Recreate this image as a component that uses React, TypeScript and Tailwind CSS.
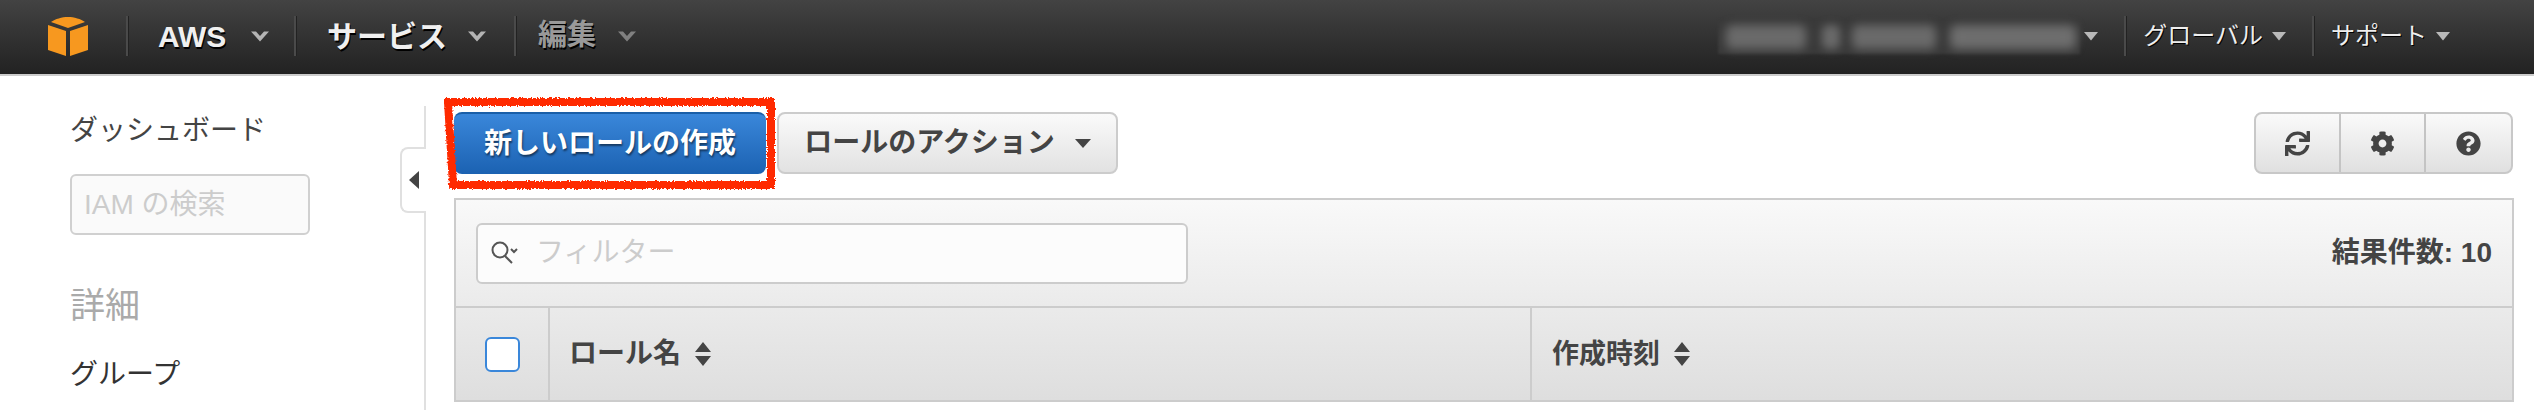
import { FC, ReactNode } from 'react';
import { FaCog, FaQuestionCircle, FaSync } from 'react-icons/fa';

const font = "font-['Liberation_Sans','Noto_Sans_CJK_JP',sans-serif]";

const Chevron: FC<{ dim?: boolean }> = ({ dim }) => (
  <svg width="18" height="12" viewBox="0 0 18 12" className={dim ? 'opacity-60' : ''}>
    <path d="M0 1.5h5L9 6l4-4.5h5L9 11.5z" fill="#b4b4b4" />
  </svg>
);

const SmallCaret: FC = () => (
  <svg width="14" height="10" viewBox="0 0 14 10">
    <path d="M0 1h14L7 9.5z" fill="#b9b9b9" />
  </svg>
);

const Divider: FC = () => <div className="h-10 w-[2px] shrink-0 bg-[#4a4a4a] shadow-[1px_0_0_#222]" />;

const SortIcon: FC = () => (
  <svg width="18" height="24" viewBox="0 0 18 24" className="shrink-0">
    <path d="M9 0l8 10H1zM9 24l-8-10h16z" fill="#444" />
  </svg>
);

const NavItem: FC<{ children: ReactNode; width: string }> = ({ children, width }) => (
  <div className={`flex h-10 items-center ${width}`}>{children}</div>
);

const ToolButton: FC<{ children: ReactNode; last?: boolean }> = ({ children, last }) => (
  <button
    className={`flex h-full w-[85px] items-center justify-center text-[25px] text-[#444] ${last ? '' : 'border-r-2 border-[#c4c4c4]'}`}
  >
    {children}
  </button>
);

const Sidebar: FC = () => (
  <aside className="relative mt-[30px] w-[426px] shrink-0 border-r-2 border-[#e0e0e0] pl-[70px]">
    <div className="mt-[5px] text-[28px] leading-[40px] text-[#444]">ダッシュボード</div>
    <div className="mt-[23px] flex h-[61px] w-[240px] items-center rounded-md border-2 border-[#d0d0d0] bg-[#fafafa] px-3 text-[28px] text-[#ccc]">
      IAM の検索
    </div>
    <div className="mt-[49px] text-[35px] leading-[44px] text-[#aaa]">詳細</div>
    <div className="mt-[27px] text-[28px] leading-[40px] text-[#333]">グループ</div>
    {/* collapse tab sits on the sidebar edge */}
    <div className="absolute right-[-2px] top-[41px] flex h-[66px] w-[26px] items-center justify-center rounded-l-lg border-2 border-r-0 border-[#e0e0e0] bg-white">
      <svg width="10" height="18" viewBox="0 0 10 18">
        <path d="M10 0v18L0 9z" fill="#444" />
      </svg>
    </div>
  </aside>
);

const HandDrawnBox: FC = () => (
  <svg className="pointer-events-none absolute left-[-10px] top-[-15px] h-[94px] w-[334px]" viewBox="0 0 334 94">
    <defs>
      <filter id="rough" x="-5%" y="-10%" width="110%" height="120%">
        <feTurbulence type="fractalNoise" baseFrequency="0.6" numOctaves="2" seed="4" />
        <feDisplacementMap in="SourceGraphic" scale="4" />
      </filter>
    </defs>
    <path d="M4 5H327V88H9z" fill="none" stroke="#ff2a00" strokeWidth="8" filter="url(#rough)" />
  </svg>
);

const App: FC = () => {
  return (
    <div className={`flex h-[410px] w-[2534px] flex-col overflow-hidden bg-white ${font}`}>
      <header className="flex h-[76px] shrink-0 items-center border-b-2 border-[#ccc] bg-gradient-to-b from-[#434343] to-[#222] pb-[2px] pl-[48px] pr-[84px]">
        <svg width="40" height="39" viewBox="0 0 40 39" className="mr-[38px] shrink-0">
          <path d="M20 0c6 0 13 2 17 5L20 11 3 5C7 2 14 0 20 0z" fill="#f7981f" />
          <path d="M0 8l18 6v25L0 33zM40 8l-18 6v25l18-6z" fill="#f7981f" />
        </svg>
        <Divider />
        <NavItem width="w-[166px] pl-[30px]">
          <span className="text-[30px] font-bold text-[#f0f0f0] [text-shadow:1px_2px_0_#000]">AWS</span>
          <span className="ml-[25px]"><Chevron /></span>
        </NavItem>
        <Divider />
        <NavItem width="w-[218px] pl-[31px]">
          <span className="text-[30px] font-bold text-[#f0f0f0] [text-shadow:1px_2px_0_#000]">サービス</span>
          <span className="ml-[21px]"><Chevron /></span>
        </NavItem>
        <Divider />
        <NavItem width="w-[150px] pl-[22px]">
          <span className="text-[29px] font-bold text-[#999] [text-shadow:1px_2px_0_#000]">編集</span>
          <span className="ml-[22px]"><Chevron dim /></span>
        </NavItem>

        <div className="ml-auto flex items-center">
          <div className="relative mr-[4px] h-[35px] w-[362px] bg-[#3a3a3a] blur-[1px]">
            <div className="absolute left-[8px] top-[6px] h-[24px] w-[80px] rounded-md bg-[#6a6a6a] blur-[5px]" />
            <div className="absolute left-[104px] top-[6px] h-[24px] w-[18px] rounded-md bg-[#6a6a6a] blur-[4px]" />
            <div className="absolute left-[134px] top-[6px] h-[24px] w-[84px] rounded-md bg-[#6a6a6a] blur-[5px]" />
            <div className="absolute left-[232px] top-[6px] h-[24px] w-[126px] rounded-md bg-[#6e6e6e] blur-[5px]" />
          </div>
          <SmallCaret />
          <div className="ml-[26px]"><Divider /></div>
          <span className="ml-[17px] text-[24px] text-[#eee] [text-shadow:1px_1px_0_#000]">グローバル</span>
          <span className="ml-[9px]"><SmallCaret /></span>
          <div className="ml-[26px]"><Divider /></div>
          <span className="ml-[17px] text-[24px] text-[#eee] [text-shadow:1px_1px_0_#000]">サポート</span>
          <span className="ml-[9px]"><SmallCaret /></span>
        </div>
      </header>

      <div className="flex min-h-0 flex-1">
        <Sidebar />
        <main className="flex-1 pl-[28px] pr-[20px] pt-[36px]">
          <div className="flex h-[62px] items-stretch">
            <div className="relative">
              <button className="h-full w-[312px] rounded-lg border-t-2 border-[#1a5fa8] bg-gradient-to-b from-[#3a87da] to-[#1b62b2] text-[28px] font-bold text-white [text-shadow:1px_2px_2px_rgba(0,0,0,0.5)]">
                新しいロールの作成
              </button>
              <HandDrawnBox />
            </div>
            <button className="ml-[11px] flex w-[341px] items-center justify-center gap-[20px] rounded-lg border-2 border-[#ccc] bg-gradient-to-b from-[#fafafa] to-[#e2e2e2] text-[28px] font-bold text-[#444]">
              ロールのアクション
              <svg width="16" height="9" viewBox="0 0 16 9"><path d="M0 0h16L8 9z" fill="#444" /></svg>
            </button>
            <div className="ml-auto mr-[1px] flex overflow-hidden rounded-lg border-2 border-[#c8c8c8] bg-gradient-to-b from-[#fafafa] to-[#e0e0e0]">
              <ToolButton><FaSync /></ToolButton>
              <ToolButton><FaCog /></ToolButton>
              <ToolButton last><FaQuestionCircle /></ToolButton>
            </div>
          </div>

          <section className="mt-[24px] border-2 border-[#ccc] bg-gradient-to-b from-[#f9f9f9] to-[#dedede]">
            <div className="flex h-[108px] items-center justify-between border-b-2 border-[#ccc] pl-[20px] pr-[20px]">
              <div className="flex h-[61px] w-[712px] items-center rounded-md border-2 border-[#ccc] bg-[#fcfcfc] pl-[12px]">
                <svg width="30" height="26" viewBox="0 0 30 26" className="shrink-0">
                  <circle cx="10" cy="10" r="7.5" fill="none" stroke="#555" strokeWidth="2" />
                  <path d="M15 16l7 7" stroke="#555" strokeWidth="2" />
                  <path d="M21 9l3 3 3-3" fill="none" stroke="#555" strokeWidth="2" />
                </svg>
                <input
                  readOnly
                  placeholder="フィルター"
                  className="ml-[16px] w-[600px] bg-transparent text-[28px] outline-none placeholder:text-[#ccc]"
                />
              </div>
              <span className="text-[28px] font-bold text-[#444]">結果件数: 10</span>
            </div>
            <div className="flex h-[92px] items-stretch">
              <div className="flex w-[94px] shrink-0 items-center justify-center border-r-2 border-[#ccc]">
                <input type="checkbox" readOnly className="h-[35px] w-[35px] appearance-none rounded-md border-2 border-[#3a87da] bg-white" />
              </div>
              <div className="flex w-[982px] shrink-0 items-center gap-[13px] border-r-2 border-[#ccc] pl-[19px]">
                <span className="text-[28px] font-bold text-[#444]">ロール名</span>
                <SortIcon />
              </div>
              <div className="flex flex-1 items-center gap-[13px] pl-[20px]">
                <span className="text-[27px] font-bold text-[#444]">作成時刻</span>
                <SortIcon />
              </div>
            </div>
          </section>
        </main>
      </div>
    </div>
  );
};

export default App;
